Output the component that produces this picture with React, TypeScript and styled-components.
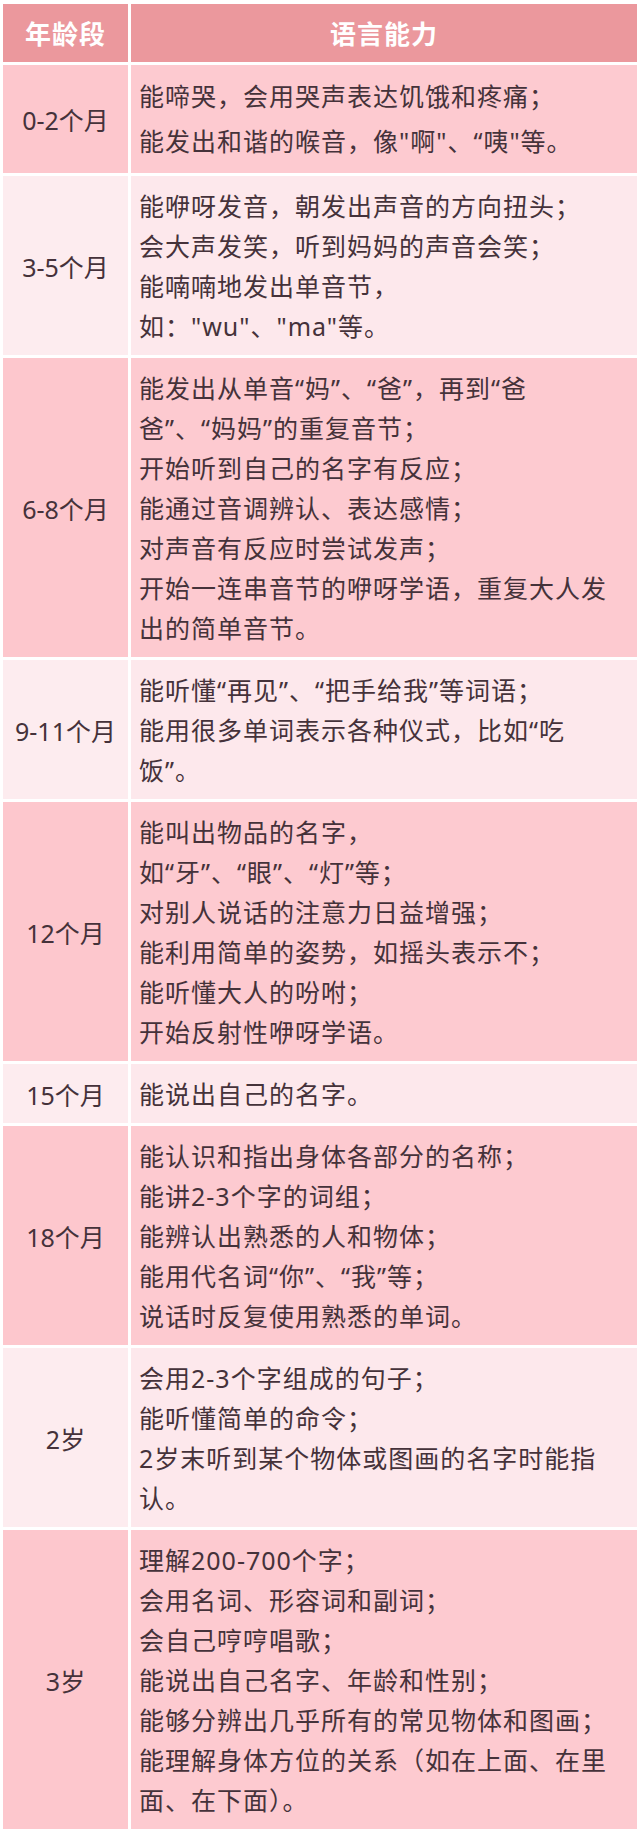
import styled, { createGlobalStyle } from 'styled-components';

type Tone = 'dark' | 'light';

interface Stage {
  age: string;
  tone: Tone;
  lineHeight?: number;
  lines: string[];
}

const stages: Stage[] = [
  {
    age: '0-2个月',
    tone: 'dark',
    lineHeight: 45,
    lines: ['能啼哭，会用哭声表达饥饿和疼痛；', '能发出和谐的喉音，像"啊"、“咦"等。'],
  },
  {
    age: '3-5个月',
    tone: 'light',
    lines: [
      '能咿呀发音，朝发出声音的方向扭头；',
      '会大声发笑，听到妈妈的声音会笑；',
      '能喃喃地发出单音节，',
      '如："wu"、"ma"等。',
    ],
  },
  {
    age: '6-8个月',
    tone: 'dark',
    lines: [
      '能发出从单音“妈”、“爸”，再到“爸',
      '爸”、“妈妈”的重复音节；',
      '开始听到自己的名字有反应；',
      '能通过音调辨认、表达感情；',
      '对声音有反应时尝试发声；',
      '开始一连串音节的咿呀学语，重复大人发',
      '出的简单音节。',
    ],
  },
  {
    age: '9-11个月',
    tone: 'light',
    lines: ['能听懂“再见”、“把手给我”等词语；', '能用很多单词表示各种仪式，比如“吃', '饭”。'],
  },
  {
    age: '12个月',
    tone: 'dark',
    lines: [
      '能叫出物品的名字，',
      '如“牙”、“眼”、“灯”等；',
      '对别人说话的注意力日益增强；',
      '能利用简单的姿势，如摇头表示不；',
      '能听懂大人的吩咐；',
      '开始反射性咿呀学语。',
    ],
  },
  {
    age: '15个月',
    tone: 'light',
    lines: ['能说出自己的名字。'],
  },
  {
    age: '18个月',
    tone: 'dark',
    lines: [
      '能认识和指出身体各部分的名称；',
      '能讲2-3个字的词组；',
      '能辨认出熟悉的人和物体；',
      '能用代名词“你”、“我”等；',
      '说话时反复使用熟悉的单词。',
    ],
  },
  {
    age: '2岁',
    tone: 'light',
    lines: [
      '会用2-3个字组成的句子；',
      '能听懂简单的命令；',
      '2岁末听到某个物体或图画的名字时能指',
      '认。',
    ],
  },
  {
    age: '3岁',
    tone: 'dark',
    lines: [
      '理解200-700个字；',
      '会用名词、形容词和副词；',
      '会自己哼哼唱歌；',
      '能说出自己名字、年龄和性别；',
      '能够分辨出几乎所有的常见物体和图画；',
      '能理解身体方位的关系（如在上面、在里',
      '面、在下面）。',
    ],
  },
];

export default function App() {
  return (
    <>
      <GlobalStyle />
      <Table>
        <HeaderRow>
          <HeaderCell>年龄段</HeaderCell>
          <HeaderCell>语言能力</HeaderCell>
        </HeaderRow>
        {stages.map((s) => (
          <Row key={s.age}>
            <AgeCell tone={s.tone}>{s.age}</AgeCell>
            <TextCell tone={s.tone} lineHeight={s.lineHeight ?? 40}>
              {s.lines.map((l, i) => (
                <Line key={i}>{l}</Line>
              ))}
            </TextCell>
          </Row>
        ))}
      </Table>
    </>
  );
}

const GlobalStyle = createGlobalStyle`
  html, body {
    margin: 0;
    padding: 0;
    background: #ffffff;
  }
  body {
    font-family: 'Noto Sans', 'Noto Sans CJK SC', sans-serif;
    color: #45323a;
  }
`;

const bg = {
  dark: { left: '#fdc7cd', right: '#fdcad0' },
  light: { left: '#fdecef', right: '#fde8ec' },
};

const Table = styled.div`
  width: 634px;
  margin: 4px 3px 0;
  display: flex;
  flex-direction: column;
  gap: 3px;
`;

const HeaderRow = styled.div`
  display: grid;
  grid-template-columns: 125px 1fr;
  column-gap: 3px;
  height: 58px;
`;

const HeaderCell = styled.div`
  display: flex;
  align-items: center;
  justify-content: center;
  background: #eb989d;
  color: #ffffff;
  font-size: 26px;
  font-weight: 700;
  letter-spacing: 1px;
`;

const Row = styled.div`
  display: grid;
  grid-template-columns: 125px 1fr;
  column-gap: 3px;
`;

const AgeCell = styled.div<{ tone: Tone }>`
  display: flex;
  align-items: center;
  justify-content: center;
  background: ${(p) => bg[p.tone].left};
  font-size: 25px;
  white-space: nowrap;
`;

const TextCell = styled.div<{ tone: Tone; lineHeight: number }>`
  background: ${(p) => bg[p.tone].right};
  padding: ${(p) => (p.lineHeight > 40 ? '9px' : '9.5px')} 8px;
  font-size: 25px;
  letter-spacing: 1px;
  line-height: ${(p) => p.lineHeight}px;
`;

const Line = styled.div`
  white-space: nowrap;
`;
